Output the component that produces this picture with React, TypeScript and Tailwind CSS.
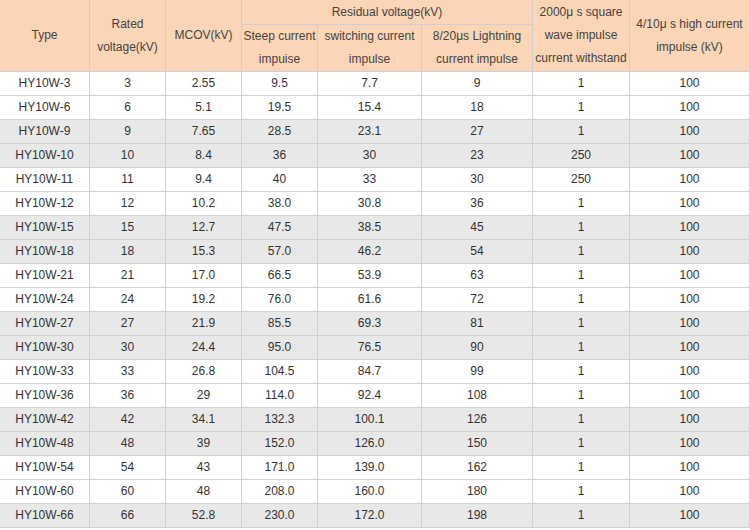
import React from "react";

const rows: string[][] = [
  ["HY10W-3", "3", "2.55", "9.5", "7.7", "9", "1", "100"],
  ["HY10W-6", "6", "5.1", "19.5", "15.4", "18", "1", "100"],
  ["HY10W-9", "9", "7.65", "28.5", "23.1", "27", "1", "100"],
  ["HY10W-10", "10", "8.4", "36", "30", "23", "250", "100"],
  ["HY10W-11", "11", "9.4", "40", "33", "30", "250", "100"],
  ["HY10W-12", "12", "10.2", "38.0", "30.8", "36", "1", "100"],
  ["HY10W-15", "15", "12.7", "47.5", "38.5", "45", "1", "100"],
  ["HY10W-18", "18", "15.3", "57.0", "46.2", "54", "1", "100"],
  ["HY10W-21", "21", "17.0", "66.5", "53.9", "63", "1", "100"],
  ["HY10W-24", "24", "19.2", "76.0", "61.6", "72", "1", "100"],
  ["HY10W-27", "27", "21.9", "85.5", "69.3", "81", "1", "100"],
  ["HY10W-30", "30", "24.4", "95.0", "76.5", "90", "1", "100"],
  ["HY10W-33", "33", "26.8", "104.5", "84.7", "99", "1", "100"],
  ["HY10W-36", "36", "29", "114.0", "92.4", "108", "1", "100"],
  ["HY10W-42", "42", "34.1", "132.3", "100.1", "126", "1", "100"],
  ["HY10W-48", "48", "39", "152.0", "126.0", "150", "1", "100"],
  ["HY10W-54", "54", "43", "171.0", "139.0", "162", "1", "100"],
  ["HY10W-60", "60", "48", "208.0", "160.0", "180", "1", "100"],
  ["HY10W-66", "66", "52.8", "230.0", "172.0", "198", "1", "100"],
];

const widths = [90, 76, 76, 76, 104, 111, 97, 120];

const th =
  "border-r border-b border-[#cfcfcf] bg-[#fbd5b5] text-center align-middle font-normal p-0 leading-[23px] whitespace-nowrap text-[#444]";

export default function App() {
  return (
    <div
      className="w-[750px] h-[530px] bg-white overflow-hidden text-[12px]"
      style={{ fontFamily: '"Liberation Sans", Arial, sans-serif' }}
    >
      <table className="table-fixed border-separate border-spacing-0 w-[750px]">
        <colgroup>
          {widths.map((w, i) => (
            <col key={i} style={{ width: w }} />
          ))}
        </colgroup>
        <thead>
          <tr className="h-[25px]">
            <th rowSpan={2} className={th}>Type</th>
            <th rowSpan={2} className={th}>
              Rated
              <br />
              voltage(kV)
            </th>
            <th rowSpan={2} className={th}>MCOV(kV)</th>
            <th colSpan={3} className={th}>Residual voltage(kV)</th>
            <th rowSpan={2} className={th}>
              2000μ s square
              <br />
              wave impulse
              <br />
              current withstand
            </th>
            <th rowSpan={2} className={th}>
              4/10μ s high current
              <br />
              impulse (kV)
            </th>
          </tr>
          <tr className="h-[47px]">
            <th className={th}>
              Steep current
              <br />
              impuise
            </th>
            <th className={th}>
              switching current
              <br />
              impulse
            </th>
            <th className={th}>
              8/20μs Lightning
              <br />
              current impulse
            </th>
          </tr>
        </thead>
        <tbody>
          {rows.map((r, i) => {
            const gray = Math.floor(i / 2) % 2 === 1;
            return (
              <tr key={i} className={gray ? "h-[24px] bg-[#e8e8e8]" : "h-[24px] bg-white"}>
                {r.map((c, j) => (
                  <td
                    key={j}
                    className="border-r border-b border-[#d2d2d2] text-center align-middle p-0 leading-[23px] text-[#333]"
                  >
                    {c}
                  </td>
                ))}
              </tr>
            );
          })}
        </tbody>
      </table>
    </div>
  );
}
